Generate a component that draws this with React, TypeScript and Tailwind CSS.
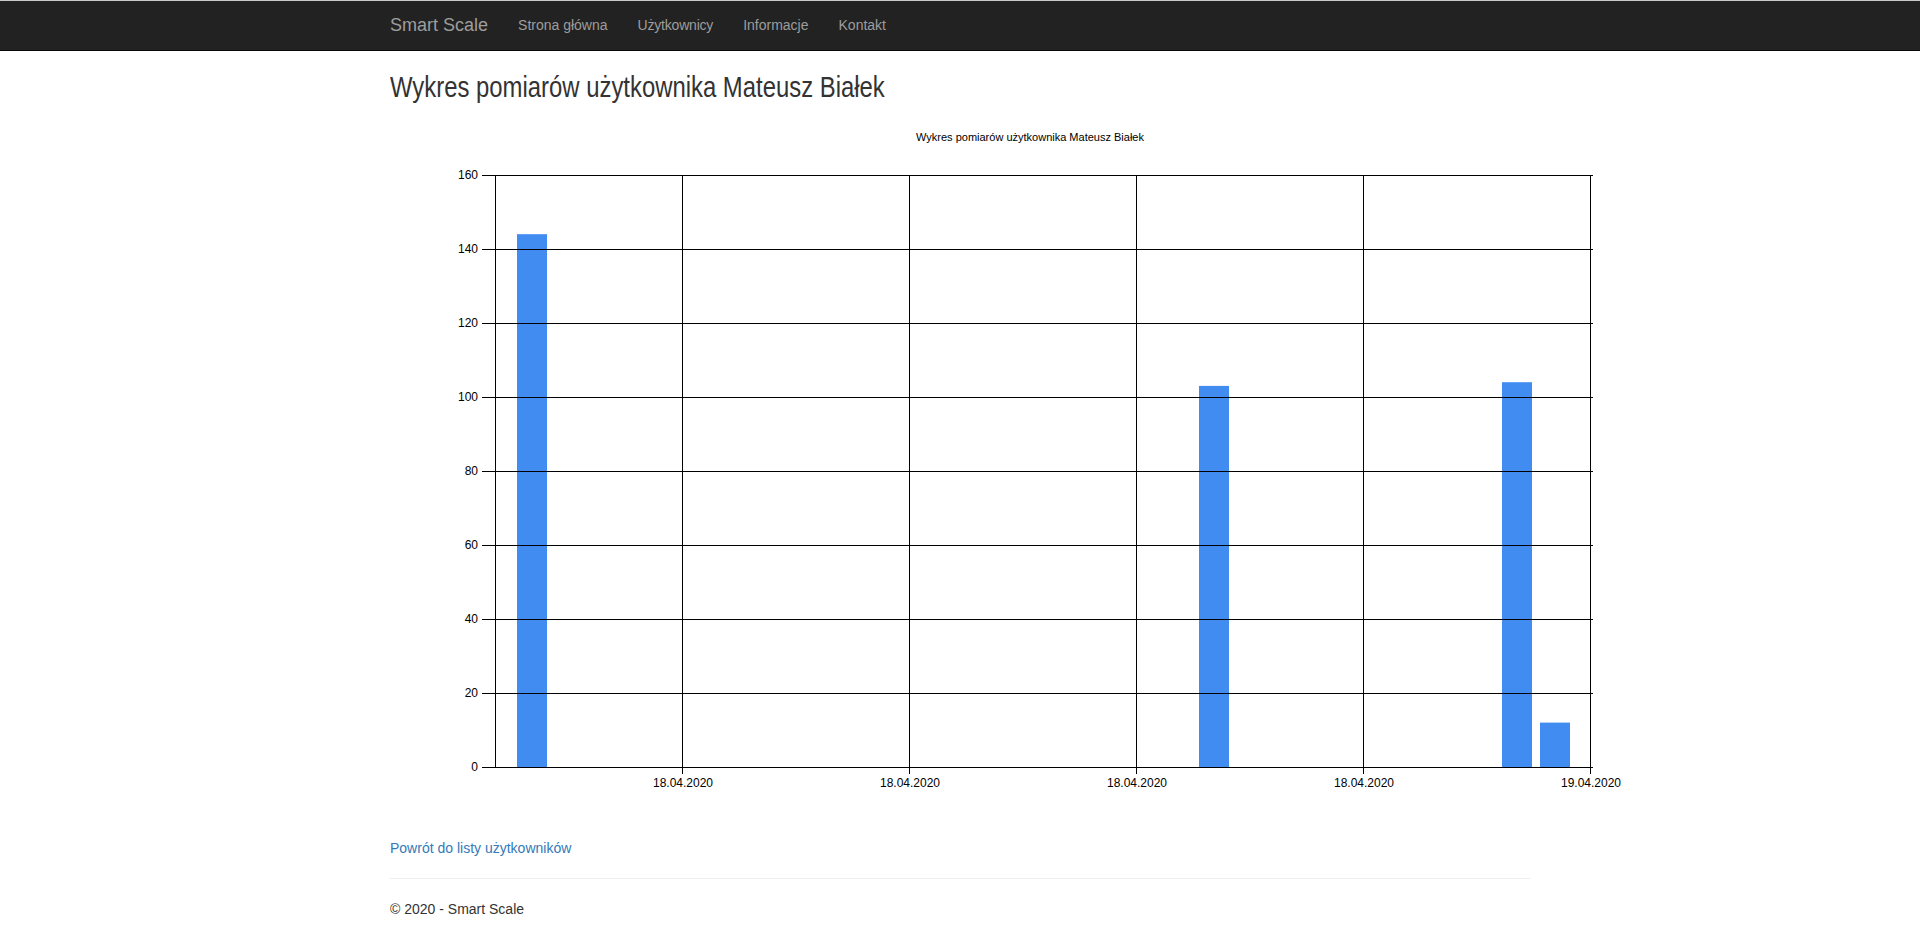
import React from "react";

const font = { fontFamily: '"Liberation Sans", Arial, Helvetica, sans-serif' };

function Chart() {
  const left = 105;
  const right = 1200;
  const top = 62;
  const bottom = 654;
  const step = 74;
  const yVals = [0, 20, 40, 60, 80, 100, 120, 140, 160];
  const xTicks = [
    { x: 292, label: "18.04.2020" },
    { x: 519, label: "18.04.2020" },
    { x: 746, label: "18.04.2020" },
    { x: 973, label: "18.04.2020" },
    { x: 1200, label: "19.04.2020" },
  ];
  const bars = [
    { x: 127, v: 144 },
    { x: 809, v: 103 },
    { x: 1112, v: 104 },
    { x: 1150, v: 12 },
  ];
  const scale = step / 20;
  return (
    <svg
      width={1280}
      height={720}
      viewBox="0 0 1280 720"
      className="block"
      style={{ fontFamily: '"Liberation Sans", Arial, sans-serif' }}
    >
      <text x={640} y={25} textAnchor="middle" dominantBaseline="middle" fontSize={11} fill="#000">
        Wykres pomiarów użytkownika Mateusz Białek
      </text>
      {bars.map((b, i) => (
        <rect key={i} x={b.x} y={bottom - b.v * scale} width={30} height={b.v * scale} fill="#418CF0" />
      ))}
      <g shapeRendering="crispEdges" stroke="#000" strokeWidth={1}>
        {yVals.map((v, i) => {
          const y = bottom - i * step + 0.5;
          return <line key={"h" + v} x1={92} y1={y} x2={right + 3} y2={y} />;
        })}
        {xTicks.map((t, i) => (
          <line key={"v" + i} x1={t.x + 0.5} y1={top} x2={t.x + 0.5} y2={bottom + 7} />
        ))}
        <line x1={left + 0.5} y1={top} x2={left + 0.5} y2={bottom + 1} />
      </g>
      {yVals.map((v, i) => (
        <text
          key={"yl" + v}
          x={88}
          y={bottom - i * step + 1}
          textAnchor="end"
          dominantBaseline="middle"
          fontSize={12}
          fill="#000"
        >
          {v}
        </text>
      ))}
      {xTicks.map((t, i) => (
        <text key={"xl" + i} x={t.x + 1} y={671} textAnchor="middle" dominantBaseline="middle" fontSize={12} fill="#000">
          {t.label}
        </text>
      ))}
    </svg>
  );
}

export default function App() {
  return (
    <div className="min-h-[948px] bg-white text-[#333] text-[14px] leading-[20px]" style={font}>
      <nav className="h-[51px] bg-[#222] border-t border-t-[#c9c9c9] border-b border-b-[#080808]">
        <div className="w-[1170px] mx-auto px-[15px] flex items-start">
          <a className="text-[18px] leading-[20px] text-[#9d9d9d] pr-[15px] pt-[14px] pb-[15px]">Smart Scale</a>
          <ul className="flex">
            <li>
              <a className="block px-[15px] pt-[14px] pb-[15px] text-[#9d9d9d] leading-[20px]">Strona główna</a>
            </li>
            <li>
              <a className="block px-[15px] pt-[14px] pb-[15px] text-[#9d9d9d] leading-[20px] tracking-[-0.2px]">Użytkownicy</a>
            </li>
            <li>
              <a className="block px-[15px] pt-[14px] pb-[15px] text-[#9d9d9d] leading-[20px]">Informacje</a>
            </li>
            <li>
              <a className="block px-[15px] pt-[14px] pb-[15px] text-[#9d9d9d] leading-[20px]">Kontakt</a>
            </li>
          </ul>
        </div>
      </nav>
      <div className="w-[1170px] mx-auto px-[15px]">
        <h2 className="text-[30px] leading-[33px] mt-[19px] mb-[10px] font-medium text-[#333] whitespace-nowrap">
          <span className="inline-block origin-left scale-x-[0.796]">Wykres pomiarów użytkownika Mateusz Białek</span>
        </h2>
        <div className="h-[725px]">
          <Chart />
        </div>
        <p className="mb-[10px]">
          <a className="text-[#337ab7]">Powrót do listy użytkowników</a>
        </p>
        <hr className="mt-[20px] mb-[20px] border-0 border-t border-t-[#eee]" />
        <footer>
          <p className="mb-[10px]">© 2020 - Smart Scale</p>
        </footer>
      </div>
    </div>
  );
}
